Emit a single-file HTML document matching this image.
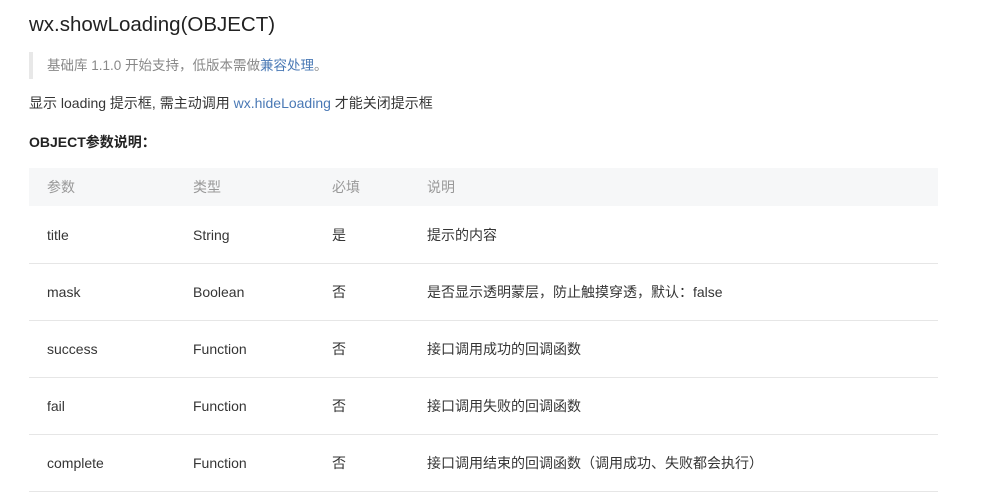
<!DOCTYPE html>
<html><head><meta charset="utf-8"><style>
body{margin:0;width:1000px;height:501px;background:#fff;font-family:"Liberation Sans","Noto Sans CJK SC",sans-serif;color:#353535;position:relative;overflow:hidden}
.a{position:absolute;white-space:nowrap;line-height:20px}
.h{left:29px;top:13px;font-size:20.5px;color:#222;line-height:24px}
.bar{left:29px;top:52px;width:4px;height:27px;background:#e8e8e8}
.q{left:47px;top:56px;font-size:13.5px;color:#888}
.l{color:#4a79b5}
.d{left:29px;top:93px;font-size:14px}
.b{left:29px;top:132px;font-size:14px;font-weight:bold;color:#222}
.th{left:29px;top:168px;width:909px;height:38px;background:#f6f7f8}
.t{font-size:14px;color:#353535}
.thd{color:#999}
.ln{left:29px;width:909px;height:1px;background:#e6e6e6}
</style></head><body>
<div class="a h">wx.showLoading(OBJECT)</div>
<div class="a bar"></div>
<div class="a q">基础库 1.1.0 开始支持，低版本需做<span class="l">兼容处理</span>。</div>
<div class="a d">显示 loading 提示框, 需主动调用 <span class="l">wx.hideLoading</span> 才能关闭提示框</div>
<div class="a b">OBJECT参数说明：</div>
<div class="a th"></div>
<div class="a t thd" style="left:47px;top:177px">参数</div>
<div class="a t thd" style="left:193px;top:177px">类型</div>
<div class="a t thd" style="left:332px;top:177px">必填</div>
<div class="a t thd" style="left:427px;top:177px">说明</div>

<div class="a t" style="left:47px;top:225px">title</div>
<div class="a t" style="left:193px;top:225px">String</div>
<div class="a t" style="left:332px;top:225px">是</div>
<div class="a t" style="left:427px;top:225px">提示的内容</div>
<div class="a ln" style="top:263px"></div>

<div class="a t" style="left:47px;top:282px">mask</div>
<div class="a t" style="left:193px;top:282px">Boolean</div>
<div class="a t" style="left:332px;top:282px">否</div>
<div class="a t" style="left:427px;top:282px">是否显示透明蒙层，防止触摸穿透，默认：false</div>
<div class="a ln" style="top:320px"></div>

<div class="a t" style="left:47px;top:339px">success</div>
<div class="a t" style="left:193px;top:339px">Function</div>
<div class="a t" style="left:332px;top:339px">否</div>
<div class="a t" style="left:427px;top:339px">接口调用成功的回调函数</div>
<div class="a ln" style="top:377px"></div>

<div class="a t" style="left:47px;top:396px">fail</div>
<div class="a t" style="left:193px;top:396px">Function</div>
<div class="a t" style="left:332px;top:396px">否</div>
<div class="a t" style="left:427px;top:396px">接口调用失败的回调函数</div>
<div class="a ln" style="top:434px"></div>

<div class="a t" style="left:47px;top:453px">complete</div>
<div class="a t" style="left:193px;top:453px">Function</div>
<div class="a t" style="left:332px;top:453px">否</div>
<div class="a t" style="left:427px;top:453px">接口调用结束的回调函数（调用成功、失败都会执行）</div>
<div class="a ln" style="top:491px"></div>
</body></html>
